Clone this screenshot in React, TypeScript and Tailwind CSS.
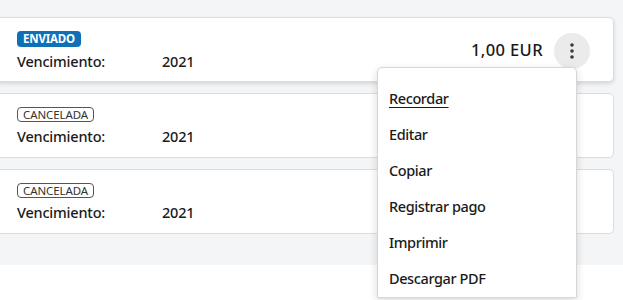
import React from 'react';

type Row = {
  status: string;
  tone: 'sent' | 'cancelled';
  year: string;
  amount?: string;
  active?: boolean;
};

const rows: Row[] = [
  { status: 'ENVIADO', tone: 'sent', year: '2021', amount: '1,00 EUR', active: true },
  { status: 'CANCELADA', tone: 'cancelled', year: '2021' },
  { status: 'CANCELADA', tone: 'cancelled', year: '2021' },
];

const menuItems = ['Recordar', 'Editar', 'Copiar', 'Registrar pago', 'Imprimir', 'Descargar PDF'];

function StatusBadge({ label, tone }: { label: string; tone: Row['tone'] }) {
  if (tone === 'sent') {
    return (
      <span className="inline-flex h-[16px] items-center rounded-[4px] bg-[#0f70b7] px-[6px] text-[11.5px] font-bold leading-none tracking-[-0.2px] text-white">
        {label}
      </span>
    );
  }
  return (
    <span className="inline-flex h-[15px] items-center rounded-[4px] border border-[#555] px-[5px] text-[11.5px] leading-none tracking-[-0.1px] text-[#333]">
      {label}
    </span>
  );
}

function KebabButton() {
  return (
    <button className="flex h-[36px] w-[36px] items-center justify-center rounded-full bg-[#ebebeb]">
      <svg width="4" height="16" viewBox="0 0 4 16" fill="#3a3a3a">
        <circle cx="2" cy="2" r="1.8" />
        <circle cx="2" cy="8" r="1.8" />
        <circle cx="2" cy="14" r="1.8" />
      </svg>
    </button>
  );
}

export default function App() {
  return (
    <div
      className="relative h-[300px] w-[623px] overflow-hidden bg-white text-[#1a1a1a]"
      style={{ fontFamily: '"Noto Sans", "Open Sans", sans-serif' }}
    >
      <div className="flex h-[265px] flex-col gap-[11px] bg-[#f4f5f7] pt-[17px] pr-[9px]">
        {rows.map((row, i) => (
          <div
            key={i}
            className={
              'ml-[-5px] flex h-[65px] items-center justify-between rounded-[5px] border border-[#dcdcdc] bg-white pl-[21px] pr-[23px] ' +
              (row.active ? 'shadow-[0_2px_4px_rgba(0,0,0,0.12)]' : '')
            }
          >
            <div className="flex flex-col gap-[5px] pt-[1px]">
              <div className="flex">
                <StatusBadge label={row.status} tone={row.tone} />
              </div>
              <div className="flex text-[14.5px] font-medium leading-[18px] tracking-[-0.2px]">
                <span className="w-[145px]">Vencimiento:</span>
                <span>{row.year}</span>
              </div>
            </div>
            {row.amount && (
              <div className="flex items-center gap-[11px] pt-[2px]">
                <span className="text-[16.5px] font-medium tracking-[0.4px]">{row.amount}</span>
                <KebabButton />
              </div>
            )}
          </div>
        ))}
      </div>

      {/* actions menu, open over the rows */}
      <div className="absolute left-[377px] top-[67px] w-[200px] rounded-t-[5px] border border-[#d6d6d6] bg-white pt-[13px] shadow-[0_3px_8px_rgba(0,0,0,0.15)]">
        {menuItems.map((item, i) => (
          <div key={item} className="flex h-[36px] items-center px-[11px] text-[14.5px] font-medium tracking-[-0.4px]">
            <span className={i === 0 ? 'underline underline-offset-[3px]' : ''}>{item}</span>
          </div>
        ))}
      </div>
    </div>
  );
}
